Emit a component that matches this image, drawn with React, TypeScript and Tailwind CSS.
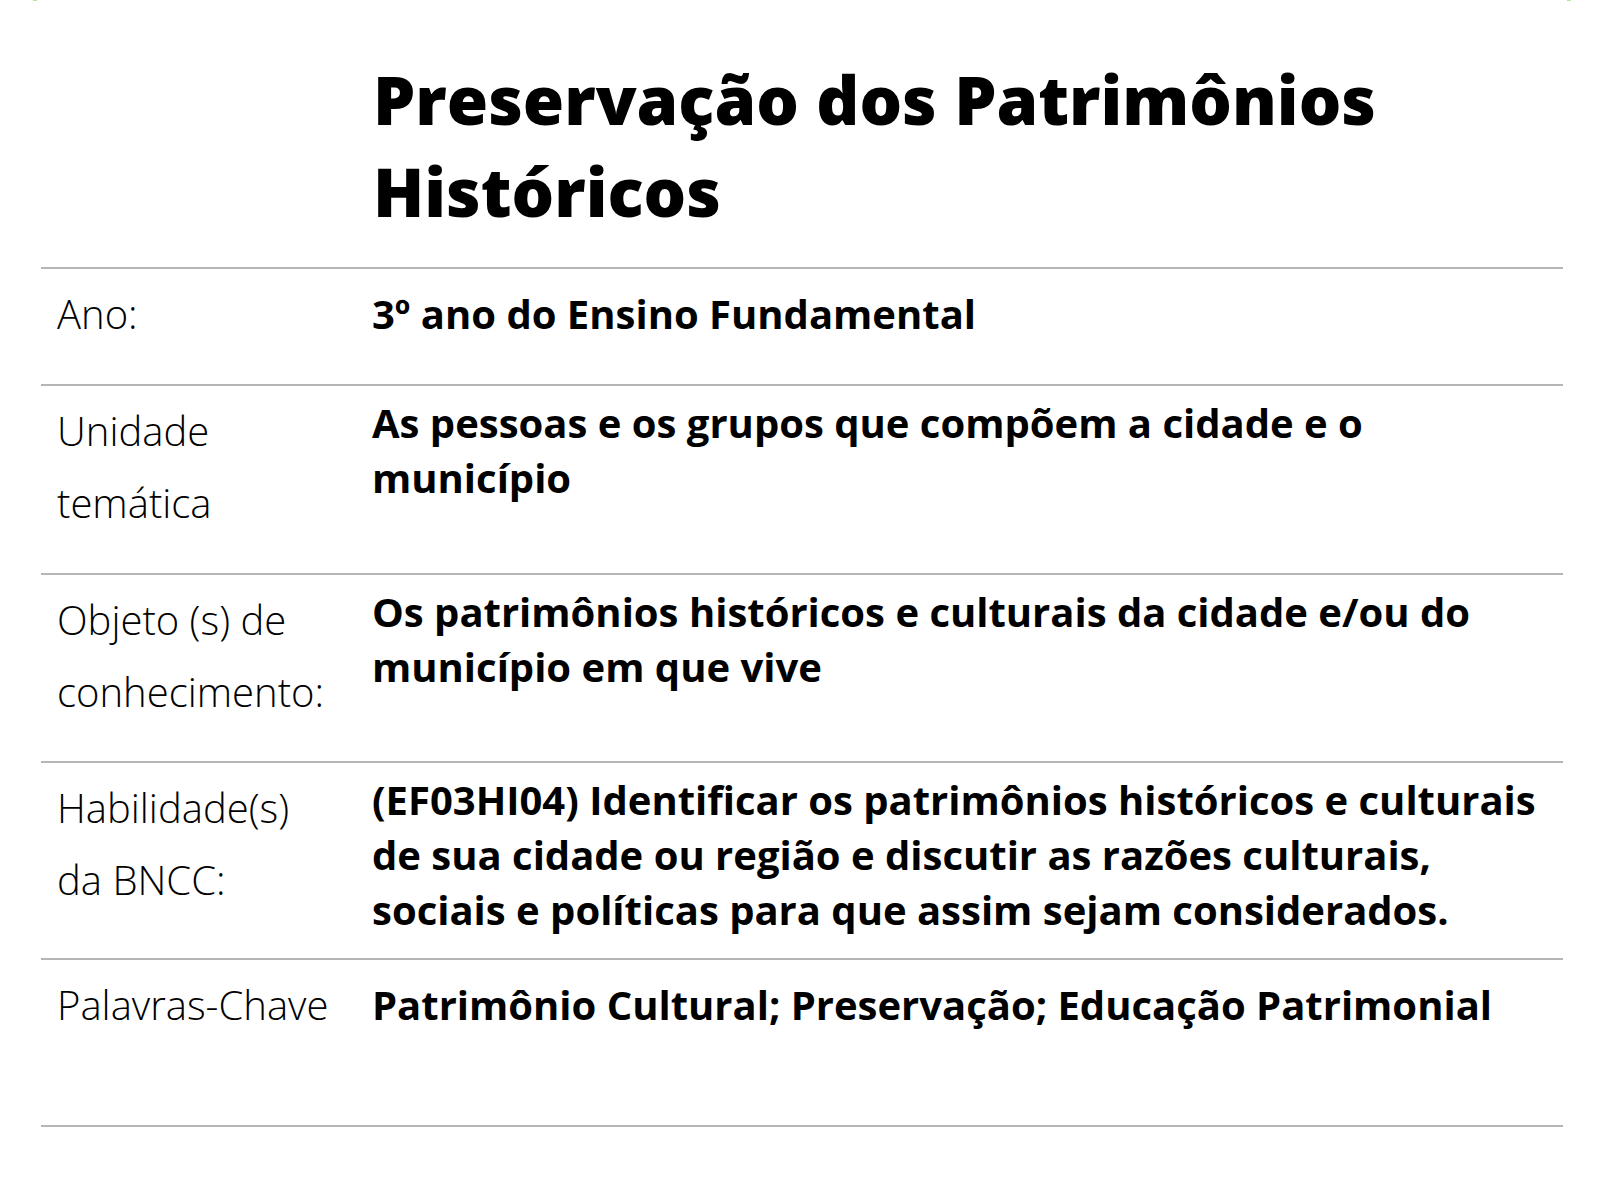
const rows = [
  {
    label: ["Ano:"],
    value: "3º ano do Ensino Fundamental",
    single: true,
    pad: "pb-[34px]",
  },
  {
    label: ["Unidade", "temática"],
    value: "As pessoas e os grupos que compõem a cidade e o município",
    single: false,
    pad: "pb-[34px]",
  },
  {
    label: ["Objeto (s) de", "conhecimento:"],
    value: "Os patrimônios históricos e culturais da cidade e/ou do município em que vive",
    single: false,
    pad: "pb-[33px]",
  },
  {
    label: ["Habilidade(s)", "da BNCC:"],
    value:
      "(EF03HI04) Identificar os patrimônios históricos e culturais de sua cidade ou região e discutir as razões culturais, sociais e políticas para que assim sejam considerados.",
    single: false,
    pad: "pb-[21px]",
  },
  {
    label: ["Palavras-Chave"],
    value: "Patrimônio Cultural; Preservação; Educação Patrimonial",
    single: true,
    pad: "pb-[84px]",
  },
]

export default function App() {
  return (
    <div className="relative w-[1600px] h-[1200px] bg-white text-black font-['Open_Sans',sans-serif]">
      {/* faint marks at the top corners */}
      <span className="absolute left-[33px] top-0 w-[4px] h-[1px] bg-[#b9e3a6]" />
      <span className="absolute left-[1567px] top-0 w-[4px] h-[1px] bg-[#b9e3a6]" />

      <div className="pl-[41px] pr-[37px]">
        <h1 className="pt-[53px] pb-[30px] pl-[332px] text-[67px] leading-[92px] font-extrabold">
          Preservação dos Patrimônios Históricos
        </h1>

        {rows.map((row) => (
          <div
            key={row.label.join(" ")}
            className={`grid grid-cols-[331px_1fr] border-t-2 border-[#b5b5b5] pt-[9px] ${row.pad}`}
          >
            <div className="pl-[16px] text-[40px] leading-[72px] font-light">
              {row.label.map((l) => (
                <div key={l}>{l}</div>
              ))}
            </div>
            <div
              className={
                row.single
                  ? "pr-[12px] text-[40px] leading-[72px] font-bold"
                  : "pr-[12px] text-[40px] leading-[55px] font-bold"
              }
            >
              {row.value}
            </div>
          </div>
        ))}
        <div className="border-t-2 border-[#b5b5b5]" />
      </div>
    </div>
  )
}
